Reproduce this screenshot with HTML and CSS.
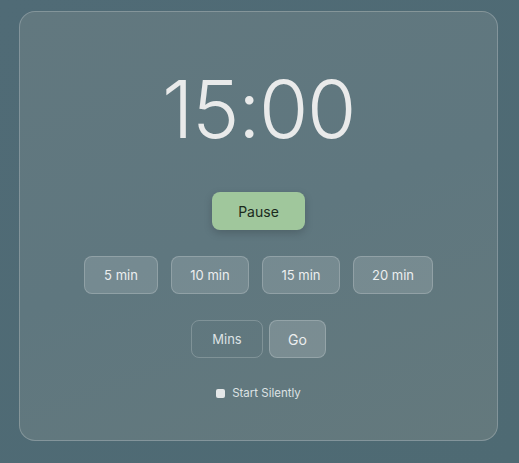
FILE: index.html
```html
<!DOCTYPE html>
<html lang="en">
<head>
  <meta charset="UTF-8" />
  <meta name="viewport" content="width=device-width, initial-scale=1.0"/>
  <title>Timer</title>
  <link rel="stylesheet" href="styles.css">
</head>
<body>
  <div class="timer-card">
    <div class="time" id="time">15:00</div>

    <button class="pause-btn" id="pause">Pause</button>

    <div class="presets">
      <button class="glass-btn preset">5 min</button>
      <button class="glass-btn preset">10 min</button>
      <button class="glass-btn preset">15 min</button>
      <button class="glass-btn preset wide">20 min</button>
    </div>

    <div class="custom">
      <input class="mins-input" type="text" placeholder="Mins" />
      <button class="glass-btn go-btn">Go</button>
    </div>

    <label class="silent">
      <span class="box"></span>
      Start Silently
    </label>
  </div>
</body>
</html>
```

FILE: styles.css
```css
* {
  box-sizing: border-box;
}

body {
  margin: 0;
  padding: 11px 21px 22px 19px;
  font-family: 'Inter', 'Liberation Sans', sans-serif;
  background: linear-gradient(135deg, #506b76 0%, #4e6a73 100%);
  min-height: 463px;
}

.timer-card {
  height: 430px;
  border: 1px solid rgba(255,255,255,0.22);
  border-radius: 16px;
  background: linear-gradient(160deg, #62787f 0%, #5f777f 50%, #64797d 100%);
  display: flex;
  flex-direction: column;
  align-items: center;
  padding-top: 57px;
}

.time {
  font-size: 80px;
  font-weight: 300;
  line-height: 80px;
  color: #e9eaea;
  letter-spacing: -1.5px;
}

.pause-btn {
  margin-top: 43px;
  width: 93px;
  height: 38px;
  border: none;
  border-radius: 8px;
  background: #a0c79c;
  color: #1b2a1c;
  font-family: inherit;
  font-size: 14px;
  box-shadow: 0 3px 8px rgba(0,0,0,0.18);
}

.presets {
  margin-top: 26px;
  display: flex;
  gap: 13px;
}

.glass-btn {
  height: 38px;
  border: 1px solid rgba(255,255,255,0.2);
  border-radius: 8px;
  background: rgba(255,255,255,0.14);
  color: #eceeef;
  font-family: inherit;
  font-size: 13px;
}

.preset {
  width: 74px;
}

.preset + .preset {
  width: 78px;
}

.preset.wide {
  width: 80px;
}

.custom {
  margin-top: 26px;
  display: flex;
  gap: 6px;
}

.mins-input {
  width: 72px;
  height: 38px;
  border: 1px solid rgba(255,255,255,0.2);
  border-radius: 8px;
  background: transparent;
  color: #eceeef;
  font-family: inherit;
  font-size: 13px;
  text-align: center;
  outline: none;
}

.mins-input::placeholder {
  color: #dde2e4;
}

.go-btn {
  width: 57px;
  font-size: 14px;
  background: rgba(255,255,255,0.16);
}

.silent {
  margin-top: 28px;
  display: flex;
  align-items: center;
  gap: 7px;
  font-size: 11.5px;
  color: #dde2e4;
}

.silent .box {
  width: 9px;
  height: 9px;
  border-radius: 2px;
  background: #e4e7e8;
}
```
